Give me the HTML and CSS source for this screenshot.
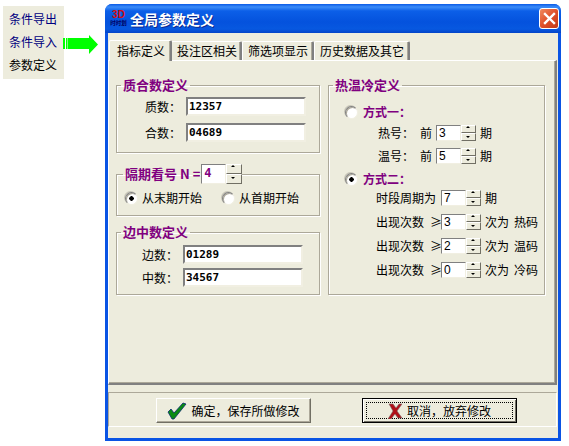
FILE: index.html
```html
<!DOCTYPE html>
<html lang="zh">
<head>
<meta charset="utf-8">
<title>全局参数定义</title>
<link rel="stylesheet" href="styles.css">
</head>
<body>
<div class="desktop">
  <nav class="side">
    <div class="side-item blue">条件导出</div>
    <div class="side-item blue">条件导入</div>
    <div class="side-item">参数定义</div>
  </nav>
  <svg class="arrow" width="35" height="19" viewBox="0 0 35 19">
    <path d="M0 3h2v11H0zM3 3h1.500v11H3z" fill="#0f0"/>
    <path d="M5 3h21V0l9 9.500L26 19v-5H5z" fill="#0f0"/>
  </svg>
  <section class="window">
    <header class="titlebar">
      <svg class="appicon" width="18" height="19" viewBox="0 0 18 19">
        <text x="8.500" y="9" text-anchor="middle" class="ico3d">3D</text>
        <text x="8.500" y="16" text-anchor="middle" class="icosub">时时划</text>
      </svg>
      <span class="title">全局参数定义</span>
      <button class="close" aria-label="关闭">
        <svg width="13" height="13" viewBox="0 0 13 13"><path d="M2 2l9 9M11 2l-9 9" stroke="#fff" stroke-width="2.4" stroke-linecap="square"/></svg>
      </button>
    </header>
    <div class="client">
      <div class="tabs">
        <div class="tab active">指标定义</div>
        <div class="tab t2">投注区相关</div>
        <div class="tab t3">筛选项显示</div>
        <div class="tab t4">历史数据及其它</div>
      </div>
      <div class="panel">
        <div class="col-left">
          <fieldset class="group g1">
            <legend>质合数定义</legend>
            <div class="frow"><label>质数：</label><div class="input">12357</div></div>
            <div class="frow"><label>合数：</label><div class="input">04689</div></div>
          </fieldset>
          <fieldset class="group g2">
            <legend class="legend-spin">隔期看号 N =
              <span class="spinbox tall"><span class="num bold">4</span><span class="spin"><i class="up"></i><i class="down"></i></span></span>
            </legend>
            <div class="radios">
              <span class="radio on"></span><span class="rtext">从末期开始</span>
              <span class="radio second"></span><span class="rtext">从首期开始</span>
            </div>
          </fieldset>
          <fieldset class="group g3">
            <legend>边中数定义</legend>
            <div class="frow"><label>边数：</label><div class="input">01289</div></div>
            <div class="frow"><label>中数：</label><div class="input">34567</div></div>
          </fieldset>
        </div>
        <fieldset class="group gr">
          <legend>热温冷定义</legend>
          <div class="mode"><span class="radio"></span><span class="modetext">方式一：</span></div>
          <div class="row r1"><span class="rl">热号：</span><span class="qian">前</span><span class="spinbox"><span class="num">3</span><span class="spin"><i class="up"></i><i class="down"></i></span></span><span>期</span></div>
          <div class="row r1"><span class="rl">温号：</span><span class="qian">前</span><span class="spinbox"><span class="num">5</span><span class="spin"><i class="up"></i><i class="down"></i></span></span><span>期</span></div>
          <div class="mode m2"><span class="radio on"></span><span class="modetext">方式二：</span></div>
          <div class="row r2"><span class="rl2">时段周期为</span><span class="spinbox"><span class="num">7</span><span class="spin"><i class="up"></i><i class="down"></i></span></span><span>期</span></div>
          <div class="row r2"><span class="rl2"><span class="cnt">出现次数</span>≥</span><span class="spinbox"><span class="num">3</span><span class="spin"><i class="up"></i><i class="down"></i></span></span><span class="cw">次为</span><span>热码</span></div>
          <div class="row r2"><span class="rl2"><span class="cnt">出现次数</span>≥</span><span class="spinbox"><span class="num">2</span><span class="spin"><i class="up"></i><i class="down"></i></span></span><span class="cw">次为</span><span>温码</span></div>
          <div class="row r2"><span class="rl2"><span class="cnt">出现次数</span>≥</span><span class="spinbox"><span class="num">0</span><span class="spin"><i class="up"></i><i class="down"></i></span></span><span class="cw">次为</span><span>冷码</span></div>
        </fieldset>
      </div>
      <footer class="bar">
        <button class="btn">
          <svg width="20" height="18" viewBox="0 0 20 18"><path d="M1 10l3-3 3 4 9-10 3 1-12 15h-2z" fill="#0a8a14" stroke="#0a2a70" stroke-width=".8"/></svg>
          确定，保存所做修改
        </button>
        <button class="btn focus">
          <span class="dots">
            <svg width="15" height="16" viewBox="0 0 15 16"><path d="M1 1h4l3 4 3-4h3l-5 7 5 7h-4l-3-4-4 5H0l5-8z" fill="#b01018" stroke="#7a6868" stroke-width=".6"/></svg>
            取消，放弃修改
          </span>
        </button>
      </footer>
    </div>
  </section>
</div>
</body>
</html>
```
FILE: styles.css
```css
* { box-sizing: border-box; }
html, body { margin: 0; padding: 0; background: #fff; }
body { font: 12px/1 "Noto Sans CJK SC", "Liberation Sans", sans-serif; color: #000; width: 569px; height: 446px; overflow: hidden; }
.desktop { display: flex; align-items: flex-start; padding: 4px 0 0 3px; }
.side { width: 61px; margin-top: 2px; height: 73px; background: #edecdd; padding-top: 1px; flex: none; }
.side-item { height: 23px; line-height: 23px; padding-left: 6px; }
.blue { color: #000080; }
.arrow { flex: none; margin: 31px 7px 0 -1px; }
.window { width: 456px; height: 437px; flex: none; background: #0a54e4; border-radius: 7px 7px 0 0; padding: 0 3px 3px; display: flex; flex-direction: column; }
.titlebar { height: 29px; flex: none; margin: 0 -3px; padding: 0 3px 0 5px; display: flex; align-items: center; border-radius: 7px 7px 0 0;
  background: linear-gradient(#0a5ae6 0, #3b8cf8 3px, #0c5fe8 7px, #0452dd 18px, #0758e0 25px, #0344c8 29px); }
.appicon { flex: none; margin-right: 2px; }
.ico3d { font: bold 10px "Liberation Sans", sans-serif; fill: #d80c0c; }
.icosub { font: bold 5.500px "Noto Sans CJK SC", sans-serif; fill: #000060; }
.title { color: #fff; font-weight: 700; font-size: 14px; flex: 1; text-shadow: 1px 1px 0 #0a2a90; }
.close { width: 20px; height: 21px; padding: 0; border: 1px solid #fff; border-radius: 3px; background: linear-gradient(135deg, #f08a60, #e0502a 50%, #c03a18); display: flex; align-items: center; justify-content: center; margin-right: -1px; }
.client { flex: 1; background: #edecdd; display: flex; flex-direction: column; min-height: 0; }
.tabs { display: flex; height: 27px; flex: none; padding: 8px 0 0 1px; align-items: flex-end; }
.tab { height: 19px; line-height: 18px; padding: 0 0 0 5px; white-space: nowrap; flex: none; background: #edecdd; border: 1px solid #fff; border-bottom: 0; border-right: 2px solid #808080; box-shadow: inset -1px 0 0 #aca899; border-radius: 2px 2px 0 0; }
.tab.active { width: 63px; height: 21px; line-height: 20px; padding: 0 0 0 7px; position: relative; top: 1px; z-index: 1; margin-right: -1px; }
.t2 { width: 71px; }
.t3 { width: 72px; }
.t4 { width: 96px; }
.panel { height: 325px; flex: none; margin-right: 1px; border: 1px solid #fff; border-right: 2px solid #808080; border-bottom: 2px solid #808080; box-shadow: inset -1px -1px 0 #aca899; display: flex; gap: 8px; padding: 17px 0 0 7px; align-items: flex-start; }
.col-left { width: 204px; flex: none; display: flex; flex-direction: column; }
.group { margin: 0; padding: 0; min-width: 0; border: 1px solid #aca899; box-shadow: 1px 1px 0 #fff, inset 1px 1px 0 #fff; }
.group legend { font-size: 13px; line-height: 14px; font-weight: 700; color: #800080; padding: 0 2px; margin-left: 4px; white-space: nowrap; }
.g1 { height: 75px; padding-top: 5px; }
.g2 { height: 52px; margin-top: 11px; padding-top: 5px; }
.g3 { height: 70px; margin-top: 9px; padding-top: 6px; }
.gr { width: 217px; height: 217px; flex: none; padding-top: 12px; }
.group .legend-spin { display: flex; align-items: center; height: 20px; margin-left: 6px; padding-right: 0; }
.frow { display: flex; align-items: center; height: 19px; margin-bottom: 7px; }
.frow label { width: 64px; text-align: right; margin-right: 5px; flex: none; }
.g3 .frow { margin-bottom: 4px; }
.g3 .frow label { width: 61px; }
.input { width: 120px; height: 19px; background: #fff; border: 2px solid; border-color: #808080 #f1efe2 #f1efe2 #808080; font: bold 11px/15px "DejaVu Sans Mono", monospace; padding-left: 1px; }
.radios { display: flex; align-items: center; padding-left: 8px; height: 18px; }
.radio { width: 13px; height: 13px; border-radius: 50%; flex: none; background: #fff; border: 1px solid; border-color: #808080 #f1efe2 #f1efe2 #808080; box-shadow: inset 1px 1px 0 #aca899, -1px -1px 0 #c8c6b8; display: inline-block; }
.radio.on { background: radial-gradient(circle, #000 0 2px, #fff 2.5px); }
.rtext { margin-left: 4px; }
.radio.second { margin-left: 20px; }
.mode { display: flex; align-items: center; padding-left: 16px; height: 16px; margin-bottom: 5px; }
.modetext { color: #800080; font-weight: 700; margin-left: 5px; }
.m2 { margin-top: 6px; margin-bottom: 3px; }
.row { display: flex; align-items: center; height: 16px; }
.r1 { padding-left: 49px; margin-bottom: 7px; }
.r2 { padding-left: 47px; margin-bottom: 8px; }
.rl { width: 42px; flex: none; }
.qian { width: 16px; flex: none; }
.rl2 { width: 65px; flex: none; white-space: nowrap; }
.cnt { margin-right: 6px; }
.cw { margin-right: 5px; }
.spinbox { display: inline-flex; height: 16px; flex: none; margin-right: 4px; }
.num { width: 25px; height: 16px; background: #fff; border: 1px solid; border-color: #808080 #f1efe2 #f1efe2 #808080; font: 12px/14px "Liberation Sans", sans-serif; padding-left: 2px; color: #000; }
.num.bold { font: bold 12px/17px "DejaVu Sans Mono", monospace; color: #800080; height: 20px; }
.spin { width: 15px; display: flex; flex-direction: column; }
.spin i { flex: 1; background: #edecdd; border: 1px solid; border-color: #fff #716f64 #716f64 #fff; position: relative; display: block; }
.spin i::after { content: ""; position: absolute; left: 4px; border: 2.5px solid transparent; }
.spin .up::after { top: 0; border-bottom-color: #000; border-top: 0; }
.spin .down::after { top: 2px; border-top-color: #000; border-bottom: 0; }
.tall { height: 20px; margin-left: 1px; margin-right: 0; }
.tall .spin { width: 16px; }
.bar { display: flex; gap: 51px; padding: 5px 0 0 47px; margin-top: 7px; margin-right: 1px; height: 35px; flex: none; border: 1px solid #aca899; border-right-color: #fff; border-bottom-color: #fff; }
.btn { width: 155px; height: 25px; background: #edecdd; border: 1px solid; border-color: #fff #716f64 #716f64 #fff; box-shadow: inset -1px -1px 0 #aca899; font: inherit; display: flex; align-items: center; justify-content: center; gap: 4px; padding: 0; color: #000; }
.focus { border-color: #000; box-shadow: inset 1px 1px 0 #fff, inset -1px -1px 0 #716f64; }
.dots { width: 147px; height: 17px; border: 1px dotted #000; display: flex; align-items: center; justify-content: center; gap: 4px; }
```
